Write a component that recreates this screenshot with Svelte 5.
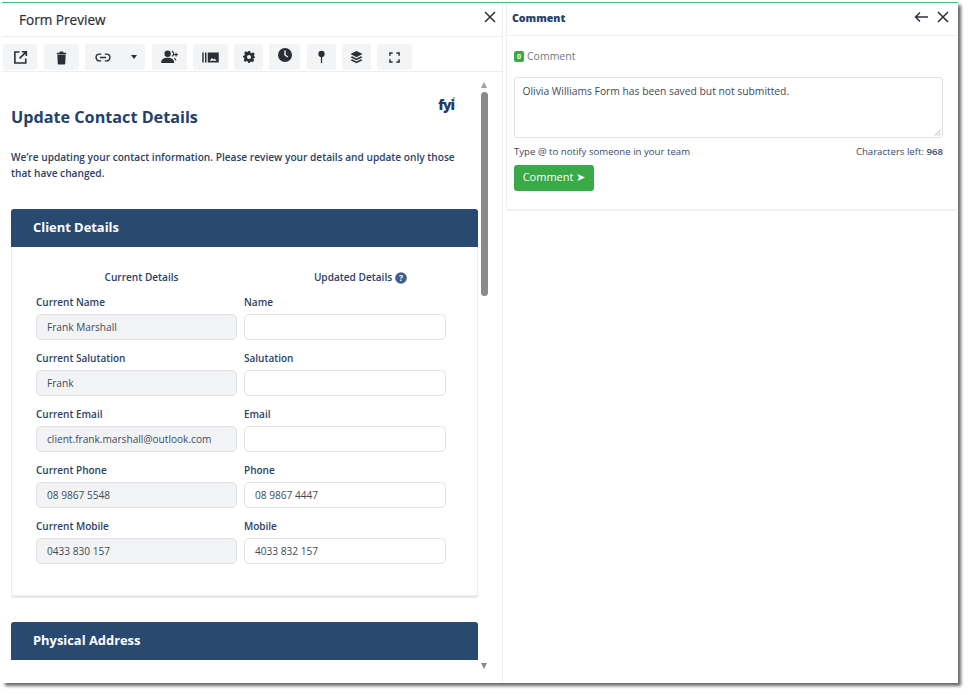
<script>
  const rows = [
    { cur: 'Current Name', val: 'Frank Marshall', label: 'Name', next: '' },
    { cur: 'Current Salutation', val: 'Frank', label: 'Salutation', next: '' },
    { cur: 'Current Email', val: 'client.frank.marshall@outlook.com', label: 'Email', next: '' },
    { cur: 'Current Phone', val: '08 9867 5548', label: 'Phone', next: '08 9867 4447' },
    { cur: 'Current Mobile', val: '0433 830 157', label: 'Mobile', next: '4033 832 157' }
  ];
</script>

<div class="page">
  <div class="frame">
    <section class="left">
      <header class="lhead">
        <h1>Form Preview</h1>
        <svg class="x" viewBox="0 0 12 12"><path d="M1 1l10 10M11 1L1 11" /></svg>
      </header>
      <div class="toolbar">
        <button class="b w34"><svg viewBox="0 0 16 16" class="ic16"><path class="st" d="M7 2.2H2v11.6h11.6V9M9.5 1.8h4.7v4.7M14 2L7 9" /></svg></button>
        <button class="b w35 g"><svg viewBox="0 0 16 16" class="ic16"><path class="fl" d="M3 3h10v1.6H3zM6 1.5h4V3H6zM3.6 5h8.8l-.4 9.5a1 1 0 0 1-1 .9H5a1 1 0 0 1-1-.9z" /></svg></button>
        <button class="b w60"><svg viewBox="0 0 18 10" class="link"><path class="st2" d="M7 1.2H5a3.8 3.8 0 0 0 0 7.6h2M11 1.2h2a3.8 3.8 0 0 1 0 7.6h-2M5.5 5h7" /></svg><i class="caret"></i></button>
        <button class="b w35 g"><svg viewBox="0 0 20 15" class="ic-user"><circle class="fl" cx="8" cy="4" r="3.4" /><path class="fl" d="M1 14c0-4 2.5-5.6 7-5.6s7 1.6 7 5.6z" /><path class="st1" d="M12.5 1.2a3 3 0 0 1 0 5.6M15 8.8c1 .5 1.6 1.2 1.8 2.2M17 3v4M15 5h4" /></svg></button>
        <button class="b w35"><svg viewBox="0 0 18 12" class="ic-lib"><path class="fl" d="M0 .5h1.6v11H0zM3 .5h1.6v11H3zM6 .5h12v11H6z" /><path d="M8 9.5l2.5-3 1.6 1.8 1.4-1.3 2 2.5z" fill="#f3f4f6" /></svg></button>
        <button class="b w29"><svg viewBox="0 0 14 14" class="ic12"><path class="fl" fill-rule="evenodd" d="M5.6 0h2.8l.4 1.9 1.3.6 1.7-1 1.9 2-1 1.6.5 1.2L14.5 6.8v0l0 1-1.8.5-.6 1.3 1 1.6-2 2-1.6-1-1.2.5L7.9 14H6.1l-.5-1.8-1.3-.5-1.6 1-2-2 1-1.6-.5-1.3L0 7.4V5.6l1.8-.4.5-1.3-1-1.6 2-2 1.6 1 1.3-.5zM7 4.6a2.4 2.4 0 1 0 0 4.8 2.4 2.4 0 0 0 0-4.8z" /></svg></button>
        <button class="b w31"><svg viewBox="0 0 14 14" class="ic14"><circle class="fl" cx="7" cy="7" r="7" /><path d="M7 2.5V7l2.8 2" fill="none" stroke="#f3f4f6" stroke-width="1.4" /></svg></button>
        <button class="b w29 g"><svg viewBox="0 0 8 15" class="ic-pin"><circle class="fl" cx="4" cy="4" r="3.6" /><rect class="fl" x="3.3" y="6" width="1.4" height="8.5" /></svg></button>
        <button class="b w29"><svg viewBox="0 0 14 14" class="ic13"><path class="fl" d="M7 0l6.5 3.3L7 6.6.5 3.3zM2.3 5.6L7 8l4.7-2.4 1.8 1L7 9.9.5 6.6zM2.3 8.9L7 11.3l4.7-2.4 1.8 1L7 13.3.5 10z" /></svg></button>
        <button class="b w35"><svg viewBox="0 0 12 12" class="ic11"><path class="st3" d="M1 4V1h3M8 1h3v3M11 8v3H8M4 11H1V8" /></svg></button>
      </div>
      <div class="viewport">
        <div class="scroll">
          <div class="titlerow">
            <h2>Update Contact Details</h2>
            <div class="fyi">fyi<span class="dot"></span></div>
          </div>
          <p class="intro">We’re updating your contact information. Please review your details and update only those that have changed.</p>
          <div class="card">
            <div class="cardhead">Client Details</div>
            <div class="cardbody">
              <div class="cols heads">
                <div class="cur">Current Details</div>
                <div class="upd">Updated Details
                  <svg viewBox="0 0 12 12" class="q"><circle cx="6" cy="6" r="5.8" fill="#3f5f8f" /><text x="6" y="9" text-anchor="middle" font-size="8.5" font-weight="700" fill="#fff">?</text></svg>
                </div>
              </div>
              {#each rows as r}
                <div class="cols row">
                  <label>{r.cur}<span class="inp ro">{r.val}</span></label>
                  <label>{r.label}<span class="inp">{r.next}</span></label>
                </div>
              {/each}
            </div>
          </div>
          <div class="cardhead">Physical Address</div>
        </div>
        <div class="sbar">
          <i class="up"></i>
          <div class="thumb"></div>
          <i class="down"></i>
        </div>
      </div>
    </section>
    <section class="right">
      <div class="rcard">
        <header class="rhead">
          <h3>Comment</h3>
          <div class="acts">
            <svg viewBox="0 0 14 12" class="arrow"><path d="M14 6H1.5M6 1.5L1.5 6 6 10.5" /></svg>
            <svg class="x" viewBox="0 0 12 12"><path d="M1 1l10 10M11 1L1 11" /></svg>
          </div>
        </header>
        <div class="rbody">
          <div class="count"><span class="badge">0</span>Comment</div>
          <div class="ta">Olivia Williams Form has been saved but not submitted.
            <svg viewBox="0 0 8 8" class="grip"><path d="M7.5 1L1 7.5M7.5 4.5L4.5 7.5" /></svg>
          </div>
          <div class="hint"><span>Type @ to notify someone in your team</span><span>Characters left: <b>968</b></span></div>
          <button class="send"><span>Comment ➤</span></button>
        </div>
      </div>
    </section>
  </div>
</div>

<style>
  :global(body) { margin: 0; background: #fff; }
  .page { width: 972px; height: 695px; padding: 2px 0 0 2px; box-sizing: border-box; font-family: "Open Sans", "Noto Sans", sans-serif; color: #2c4262; overflow: hidden; }
  .frame { width: 956px; height: 681px; display: flex; background: #fff; border-top: 1px solid #4fbd80; box-sizing: border-box; box-shadow: 3px 3px 3px 0 #6a6a6a; }
  svg { display: block; }
  .x { width: 12px; height: 12px; fill: none; stroke: #2b2f36; stroke-width: 1.5; }
  .left { width: 500px; border-right: 1px solid #eef0f2; box-sizing: content-box; display: flex; flex-direction: column; }
  .lhead { height: 33px; display: flex; align-items: center; justify-content: space-between; padding: 0 6px 0 17px; border-bottom: 1px solid #eceef0; }
  h1 { margin: 0; font-size: 13.6px; font-weight: 400; color: #2b2f36; -webkit-text-stroke: 0.2px #2b2f36; }
  .lhead .x { margin-top: -5px; }
  .toolbar { height: 35px; box-sizing: border-box; padding: 7px 0 0 1px; display: flex; gap: 6px; border-bottom: 1px solid #eceef0; }
  .b { height: 26px; border: 0; border-radius: 3px; background: #f3f4f6; padding: 0; display: flex; align-items: center; justify-content: center; }
  .g { margin-left: 1px; }
  .w34 { width: 34px; } .w35 { width: 35px; } .w60 { width: 60px; gap: 20px; padding-left: 2px; }
  .w29 { width: 29px; } .w31 { width: 31px; }
  .st, .st1, .st2, .st3 { fill: none; stroke: #2b2f36; }
  .st { stroke-width: 1.7; } .st1 { stroke-width: 1.2; } .st2 { stroke-width: 1.6; } .st3 { stroke-width: 1.6; }
  .fl { fill: #2b2f36; }
  .ic16 { width: 15px; height: 15px; }
  .link { width: 16px; height: 9px; }
  .caret { width: 0; height: 0; border: 3.5px solid transparent; border-top: 4px solid #2b2f36; border-bottom: 0; }
  .ic-user { width: 19px; height: 14px; }
  .ic-lib { width: 17px; height: 11px; }
  .ic12 { width: 12px; height: 12px; }
  .ic14 { width: 14px; height: 14px; margin-top: -4px; }
  .ic-pin { width: 7px; height: 14px; }
  .ic13 { width: 13px; height: 13px; }
  .ic11 { width: 11px; height: 11px; }
  .viewport { display: flex; height: 601px; overflow: hidden; }
  .scroll { width: 467px; padding-left: 9px; flex: none; overflow: hidden; }
  .titlerow { height: 77px; display: flex; justify-content: space-between; align-items: flex-start; padding-top: 24px; box-sizing: border-box; }
  h2 { margin: 9px 0 0; font-size: 16.2px; line-height: 24px; font-weight: 700; color: #24416a; white-space: nowrap; }
  .fyi { font-weight: 800; font-size: 14px; line-height: 16px; color: #1d3a66; letter-spacing: -1px; margin: 1px 24px 0 0; position: relative; }
  .dot { position: absolute; right: -1px; top: 0; width: 2px; height: 2px; background: #4fbd80; border-radius: 50%; }
  .intro { margin: 0 0 28px; font-size: 10.13px; line-height: 16px; font-weight: 600; width: 452px; }
  .card { border: 1px solid #eceeef; border-top: 0; border-radius: 3px; box-shadow: 0 2px 0 #e6e8ea; margin-bottom: 26px; }
  .cardhead { height: 38px; background: #294a70; color: #fff; font-size: 12.9px; font-weight: 700; line-height: 37px; padding-left: 22px; border-radius: 3px 3px 0 0; }
  .card .cardhead { margin: 0 -1px; }
  .cardbody { height: 348px; box-sizing: border-box; padding: 23px 24px 0; }
  .cols { display: grid; grid-template-columns: 201px 202px; column-gap: 7px; }
  .heads { font-size: 10.1px; font-weight: 600; line-height: 15px; text-align: center; height: 24px; margin-bottom: 1px; }
  .cur { padding-left: 10px; }
  .upd { display: flex; justify-content: center; gap: 3px; align-items: center; height: 15px; padding-left: 31px; }
  .q { width: 12px; height: 12px; }
  .row { height: 56px; }
  label { display: flex; flex-direction: column; font-size: 10px; font-weight: 600; line-height: 14px; gap: 5px; }
  .inp { height: 26px; box-sizing: border-box; border: 1.5px solid #e0e2e5; border-radius: 5px; background: #fff; padding: 0 10px; font-size: 10.15px; font-weight: 400; line-height: 25px; color: #3e4a5a; white-space: nowrap; }
  .ro { background: #f2f3f5; }
  .sbar { width: 24px; position: relative; }
  .thumb { position: absolute; left: 2.5px; top: 20px; width: 7px; height: 204px; border-radius: 4px; background: #8a8a8a; }
  .up, .down { position: absolute; left: 2.5px; width: 0; height: 0; border: 3.5px solid transparent; }
  .up { top: 10px; border-top: 0; border-bottom: 6px solid #a0a0a0; }
  .down { top: 591px; border-bottom: 0; border-top: 6px solid #8a8a8a; }
  .right { flex: 1; padding-left: 3px; }
  .rcard { height: 207px; box-sizing: border-box; border: 1px solid #eef0f2; border-top: 0; border-right: 0; border-radius: 0 0 3px 3px; box-shadow: 0 1px 0 #eef0f2; }
  .rhead { height: 32px; display: flex; align-items: center; justify-content: space-between; padding: 0 9px 0 5px; border-bottom: 1px solid #eef0f2; }
  h3 { margin: 0; font-size: 10.6px; font-weight: 800; color: #24416a; margin-top: -3px; }
  .acts { display: flex; gap: 9px; align-items: center; margin-top: -4px; }
  .arrow { width: 14px; height: 12px; fill: none; stroke: #2b2f36; stroke-width: 1.4; }
  .rbody { padding: 0 15px 0 7px; }
  .count { display: flex; align-items: center; gap: 3px; height: 20px; margin-top: 10px; font-size: 10.5px; color: #6f7a86; }
  .badge { width: 10px; height: 11px; background: #3aaa48; border-radius: 2px; color: #fff; font-size: 7px; font-weight: 700; line-height: 11px; text-align: center; }
  .ta { position: relative; height: 61px; box-sizing: border-box; margin-top: 11px; border: 1.5px solid #dfe1e4; border-radius: 3px; padding: 6px 7.5px; font-size: 10.3px; line-height: 15px; color: #3e4a5a; }
  .grip { position: absolute; right: 1px; bottom: 1px; width: 7px; height: 7px; fill: none; stroke: #8a8a8a; stroke-width: 0.8; }
  .hint { display: flex; justify-content: space-between; font-size: 9.65px; line-height: 14px; margin-top: 7px; color: #34496a; }
  .hint b { font-weight: 600; }
  .send { display: block; margin-top: 6px; width: 80px; height: 26px; background: #3aaa48; border: 0; border-radius: 3px; color: #fff; font-family: inherit; font-size: 11px; padding: 0 0 3px; }
</style>
